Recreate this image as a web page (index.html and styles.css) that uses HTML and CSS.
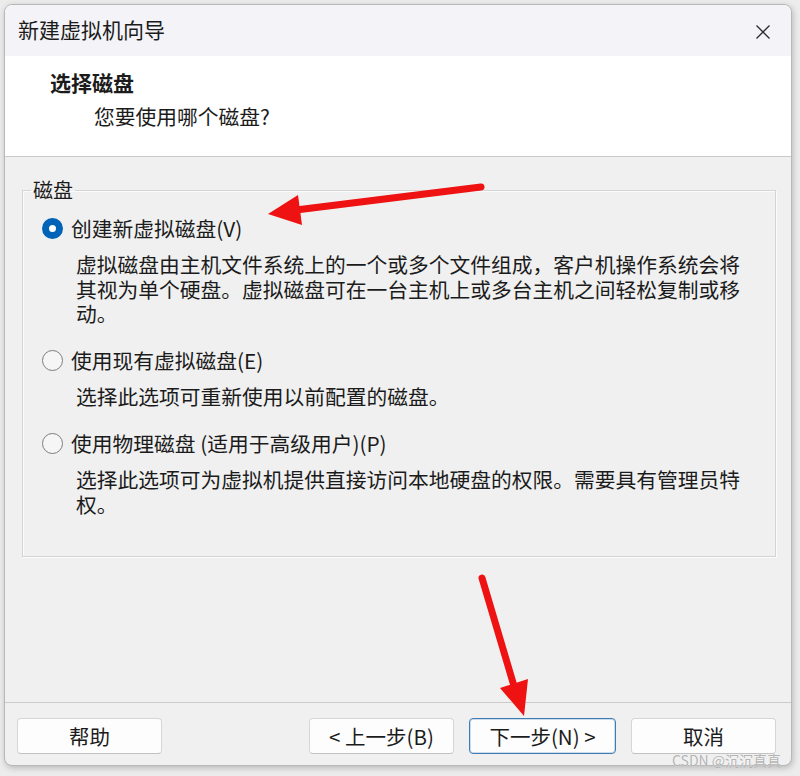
FILE: index.html
```html
<!DOCTYPE html>
<html lang="zh-CN">
<head>
<meta charset="utf-8">
<title>新建虚拟机向导</title>
<link rel="stylesheet" href="styles.css">
</head>
<body>
<div class="window">
  <div class="titlebar">
    <span class="title">新建虚拟机向导</span>
    <svg class="close" width="16" height="16" viewBox="0 0 16 16"><path d="M1.5 1.5 L14.5 14.5 M14.5 1.5 L1.5 14.5" stroke="#2b2b2b" stroke-width="1.3" fill="none"/></svg>
  </div>
  <div class="header">
    <div class="h-title">选择磁盘</div>
    <div class="h-sub">您要使用哪个磁盘?</div>
  </div>
  <div class="content">
    <fieldset class="group">
      <legend class="legend">磁盘</legend>
      <div class="options">
        <div class="option">
          <div class="opt-row"><span class="radio checked"></span><span>创建新虚拟磁盘(V)</span></div>
          <div class="desc">虚拟磁盘由主机文件系统上的一个或多个文件组成，客户机操作系统会将其视为单个硬盘。虚拟磁盘可在一台主机上或多台主机之间轻松复制或移动。</div>
        </div>
        <div class="option">
          <div class="opt-row"><span class="radio"></span><span>使用现有虚拟磁盘(E)</span></div>
          <div class="desc">选择此选项可重新使用以前配置的磁盘。</div>
        </div>
        <div class="option">
          <div class="opt-row"><span class="radio"></span><span>使用物理磁盘 (适用于高级用户)(P)</span></div>
          <div class="desc">选择此选项可为虚拟机提供直接访问本地硬盘的权限。需要具有管理员特权。</div>
        </div>
      </div>
    </fieldset>
  </div>
  <div class="footer">
    <button class="btn">帮助</button>
    <div class="spacer"></div>
    <div class="btn-group">
      <button class="btn">&lt; 上一步(B)</button>
      <button class="btn default">下一步(N) &gt;</button>
      <button class="btn">取消</button>
    </div>
  </div>
</div>
<svg class="arrows" width="800" height="776" viewBox="0 0 800 776">
  <line x1="481" y1="187" x2="296" y2="210" stroke="#ee1212" stroke-width="7" stroke-linecap="round"/>
  <polygon points="268,214 298,195 302,225" fill="#ee1212"/>
  <line x1="482" y1="578" x2="514" y2="686" stroke="#ee1212" stroke-width="7" stroke-linecap="round"/>
  <polygon points="524,716 500,688 528,679" fill="#ee1212"/>
</svg>
<div class="watermark">CSDN @沉沉真真</div>
</body>
</html>
```
FILE: styles.css
```css
* { box-sizing: border-box; }
html, body {
  margin: 0;
  padding: 0;
  background: #ececec;
  width: 800px;
  height: 776px;
  overflow: hidden;
}
body {
  position: relative;
  font-family: "Noto Sans CJK SC", "Noto Sans", sans-serif;
  color: #1b1b1b;
  padding: 4px 8px 0 4px;
}
.window {
  width: 788px;
  height: 762px;
  border: 1px solid #b8b8b8;
  border-radius: 8px;
  overflow: hidden;
  display: flex;
  flex-direction: column;
  background: #f0f0f0;
  box-shadow: 1px 2px 6px rgba(0,0,0,0.22);
}
.titlebar {
  height: 51px;
  flex: none;
  background: #f3f3f8;
  display: flex;
  align-items: center;
  justify-content: space-between;
  padding: 0 20px 4px 13px;
}
.title {
  font-size: 21px;
  line-height: 26px;
}
.close {
  margin-top: 6px;
}
.header {
  height: 101px;
  flex: none;
  background: #ffffff;
  border-bottom: 1px solid #c9c9c9;
  padding: 13px 0 0 45px;
}
.h-title {
  font-size: 21px;
  font-weight: bold;
  line-height: 26px;
}
.h-sub {
  font-size: 20.75px;
  line-height: 26px;
  margin: 8px 0 0 44px;
}
.content {
  flex: 1;
  padding: 21px 15px 0 17px;
}
.group {
  margin: 0;
  padding: 14px 20px 40px 0;
  border: 1px solid #d4d4d4;
  box-shadow: inset 1px 1px 0 #fbfbfb, 1px 1px 0 #fbfbfb;
  min-width: 0;
}
.legend {
  font-size: 20px;
  line-height: 24px;
  padding: 0 2px;
  margin-left: 8px;
}
.options {
  padding-left: 19px;
}
.option + .option {
  margin-top: 22.5px;
}
.opt-row {
  display: flex;
  align-items: center;
  height: 24px;
  font-size: 20.75px;
  gap: 8px;
}
.radio {
  width: 21px;
  height: 21px;
  border-radius: 50%;
  border: 1px solid #7d7d7d;
  background: #f6f6f6;
  flex: none;
}
.radio.checked {
  border: 7px solid #0063b8;
  background: #ffffff;
}
.desc {
  margin: 12px 0 0 34px;
  font-size: 20.75px;
  line-height: 24.5px;
}
.footer {
  height: 63px;
  flex: none;
  border-top: 1px solid #cbcbcb;
  display: flex;
  align-items: flex-start;
  padding: 15px 15px 0 12px;
}
.spacer { flex: 1; }
.btn-group {
  display: flex;
  gap: 15px;
}
.btn {
  width: 145px;
  height: 36px;
  font-family: "Noto Sans CJK SC", "Noto Sans", sans-serif;
  font-size: 20.5px;
  color: #1b1b1b;
  background: #fdfdfd;
  border: 1px solid #d6d6d6;
  border-bottom-color: #c2c2c2;
  border-radius: 4px;
  padding: 0;
  line-height: 34px;
}
.btn.default {
  width: 147px;
  border: 1px solid #3f7cb6;
  box-shadow: inset 0 0 0 1px rgba(63,124,182,0.25);
}
.arrows {
  position: absolute;
  left: 0;
  top: 0;
  pointer-events: none;
}
.watermark {
  position: absolute;
  left: 672px;
  top: 750px;
  font-size: 14px;
  line-height: 20px;
  color: rgba(160,160,160,0.8);
  text-shadow: 0 0 1px #fff;
  white-space: nowrap;
}
```
